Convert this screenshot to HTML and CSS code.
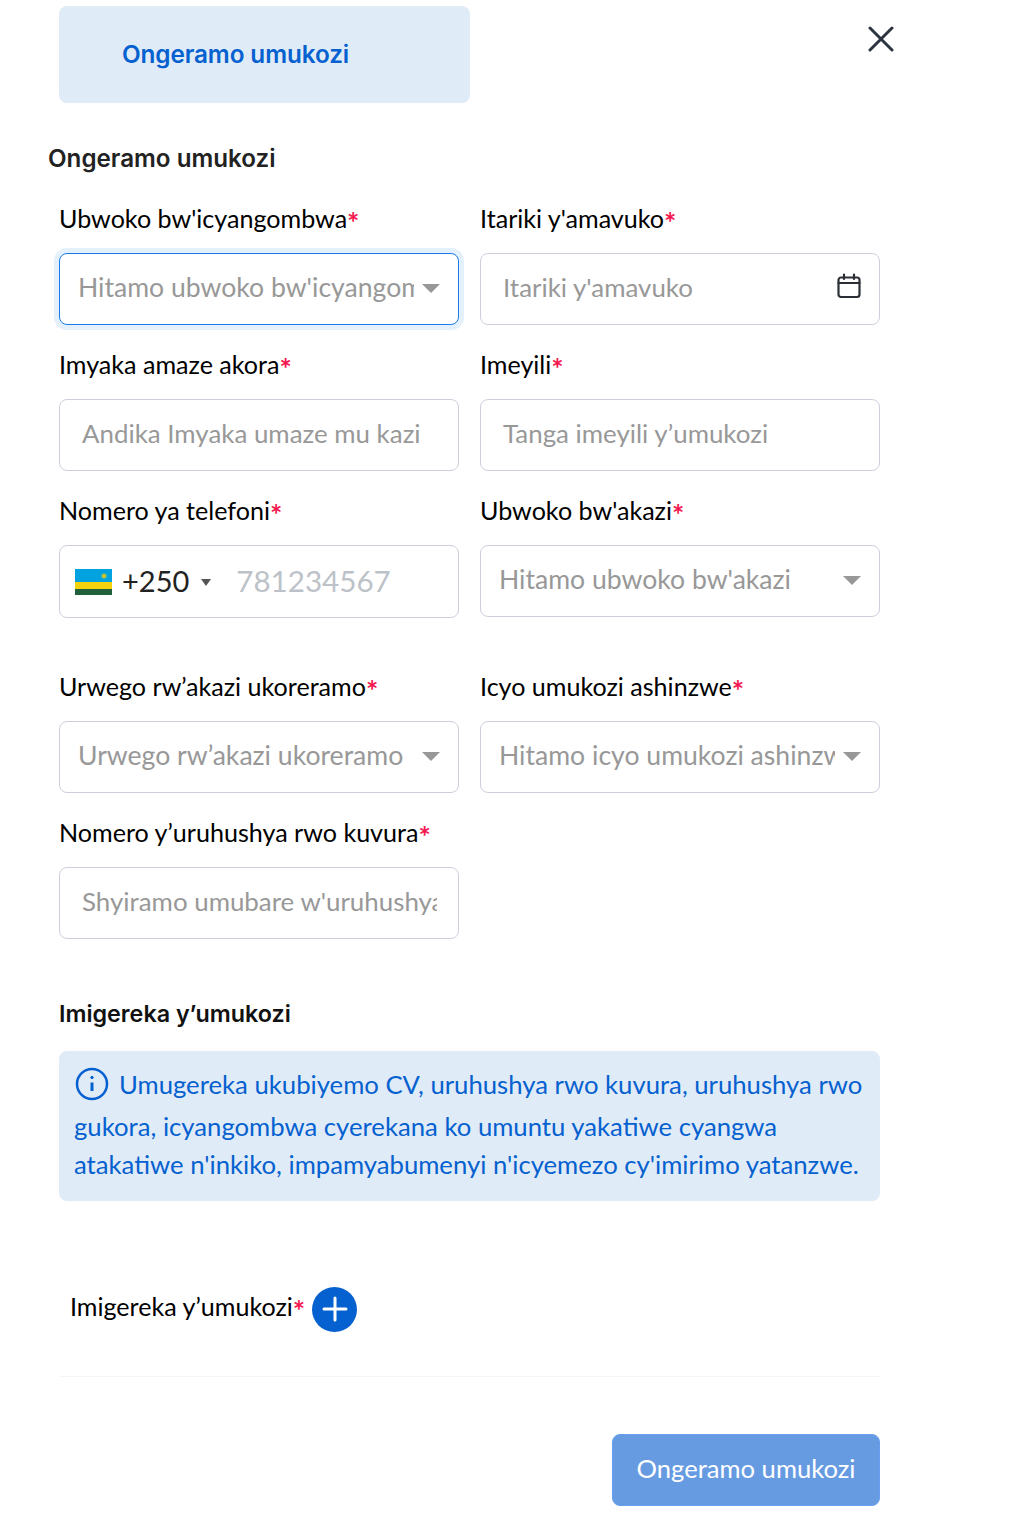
FILE: index.html
```html
<!DOCTYPE html>
<html lang="rw">
<head>
<meta charset="utf-8">
<title>Ongeramo umukozi</title>
<link rel="stylesheet" href="styles.css">
</head>
<body>
<div class="page">
  <div class="top">
    <div class="tab">Ongeramo umukozi</div>
    <svg class="close" width="26" height="26" viewBox="0 0 26 26"><path d="M2 2L24 24M24 2L2 24" stroke="#2b3440" stroke-width="3" stroke-linecap="round" fill="none"/></svg>
  </div>
  <h2 class="title">Ongeramo umukozi</h2>
  <div class="grid">
    <div class="field">
      <div class="label">Ubwoko bw'icyangombwa<span class="req">*</span></div>
      <div class="box focused select"><span class="ph">Hitamo ubwoko bw'icyangombwa</span><i class="caret"></i></div>
    </div>
    <div class="field">
      <div class="label">Itariki y'amavuko<span class="req">*</span></div>
      <div class="box input"><span class="ph">Itariki y'amavuko</span>
        <svg class="cal" width="24" height="26" viewBox="0 0 24 26" fill="none" stroke="#2b2f36" stroke-width="2.200" stroke-linecap="round"><rect x="1.500" y="4.500" width="21" height="19.500" rx="2.500"/><path d="M1.500 10H22.500M7 1.500V6M17 1.500V6"/></svg>
      </div>
    </div>
    <div class="field">
      <div class="label">Imyaka amaze akora<span class="req">*</span></div>
      <div class="box input"><span class="ph">Andika Imyaka umaze mu kazi</span></div>
    </div>
    <div class="field">
      <div class="label">Imeyili<span class="req">*</span></div>
      <div class="box input"><span class="ph">Tanga imeyili y’umukozi</span></div>
    </div>
    <div class="field tall">
      <div class="label">Nomero ya telefoni<span class="req">*</span></div>
      <div class="box phone">
        <svg class="flag" width="37" height="26" viewBox="0 0 37 26"><rect width="37" height="13" fill="#00a2e0"/><rect y="13" width="37" height="7" fill="#f4d20c"/><rect y="20" width="37" height="6" fill="#20603d"/><circle cx="29" cy="7" r="2.500" fill="#b9c43a"/></svg>
        <span class="code">+250</span><i class="mini"></i><span class="num">781234567</span>
      </div>
    </div>
    <div class="field tall">
      <div class="label">Ubwoko bw'akazi<span class="req">*</span></div>
      <div class="box select"><span class="ph">Hitamo ubwoko bw'akazi</span><i class="caret"></i></div>
    </div>
    <div class="field">
      <div class="label">Urwego rw’akazi ukoreramo<span class="req">*</span></div>
      <div class="box select"><span class="ph">Urwego rw’akazi ukoreramo</span><i class="caret"></i></div>
    </div>
    <div class="field">
      <div class="label">Icyo umukozi ashinzwe<span class="req">*</span></div>
      <div class="box select"><span class="ph">Hitamo icyo umukozi ashinzwe</span><i class="caret"></i></div>
    </div>
    <div class="field">
      <div class="label">Nomero y’uruhushya rwo kuvura<span class="req">*</span></div>
      <div class="box input"><span class="ph">Shyiramo umubare w'uruhushya</span></div>
    </div>
  </div>
  <h3 class="sub">Imigereka y’umukozi</h3>
  <div class="note">
    <p class="line first"><svg class="info" width="34" height="34" viewBox="0 0 34 34" fill="none" stroke="#0561cf" stroke-width="2.500"><circle cx="17" cy="17" r="15"/><path d="M17 15.500V24" stroke-width="3"/><circle cx="17" cy="10.500" r="1.200" fill="#0561cf" stroke-width="1"/></svg>Umugereka ukubiyemo CV, uruhushya rwo kuvura, uruhushya rwo</p>
    <p class="line">gukora, icyangombwa cyerekana ko umuntu yakatiwe cyangwa</p>
    <p class="line">atakatiwe n'inkiko, impamyabumenyi n'icyemezo cy'imirimo yatanzwe.</p>
  </div>
  <div class="attach">
    <span class="label">Imigereka y’umukozi<span class="req">*</span></span>
    <span class="plus"><svg width="26" height="26" viewBox="0 0 26 26"><path d="M13 2V24M2 13H24" stroke="#fff" stroke-width="3" stroke-linecap="round"/></svg></span>
  </div>
  <hr class="rule">
  <div class="actions"><button class="submit" type="button">Ongeramo umukozi</button></div>
</div>
</body>
</html>
```
FILE: styles.css
```css
* { box-sizing: border-box; }
html, body { margin: 0; padding: 0; background: #fff; }
body { font-family: "Lato", "Noto Sans", sans-serif; color: #000; overflow: hidden; }
.page { width: 1033px; height: 1518px; padding: 6px 0 0 59px; }
.top { width: 821px; display: flex; justify-content: space-between; align-items: flex-start; }
.tab { width: 411px; height: 97px; background: #e0ebf8; border-radius: 8px; padding: 0 0 2px 63px; display: flex; align-items: center; font-family: "Inter", sans-serif; font-size: 24.300px; font-weight: 600; color: #0561cf; letter-spacing: -0.1px; }
.close { margin: 20px -14px 0 0; }
.title { margin: 41px 0 0 -11px; font-family: "Inter", sans-serif; font-size: 24.200px; line-height: 30px; font-weight: 600; color: #222; }
.grid { width: 821px; margin-top: 29px; display: grid; grid-template-columns: 400px 400px; column-gap: 21px; }
.field { height: 146px; }
.field.tall { height: 176px; }
.label { font-size: 25.100px; line-height: 30px; color: #000; }
.req { color: #f5174f; font-size: 29px; font-weight: 700; line-height: 0; vertical-align: -5px; }
.box { margin-top: 20px; height: 72px; width: 400px; border: 1px solid #ccd0db; border-radius: 8px; display: flex; align-items: center; color: #989898; position: relative; background: #fff; }
.ph { white-space: nowrap; overflow: hidden; }
.input { padding: 0 21px 0 22px; font-size: 25.900px; }
.input .ph { flex: 1; margin-top: -4px; }
.select { padding-left: 18px; font-size: 26.600px; }
.select .ph { width: 336px; margin-top: -4px; }
.focused { border-color: #1a7bea; box-shadow: 0 0 0 5px #e5f0fd; }
.caret { margin: -2px 0 0 8px; width: 0; height: 0; border-left: 9px solid transparent; border-right: 9px solid transparent; border-top: 9px solid #989898; }
.cal { flex: none; margin: -7px -3px 0 0; }
.phone { padding-left: 15px; height: 73px; }
.flag { flex: none; }
.code { margin: -2px 0 0 10px; font-size: 29px; color: #222; }
.mini { margin: 2px 0 0 12px; width: 0; height: 0; border-left: 5px solid transparent; border-right: 5px solid transparent; border-top: 7px solid #555; }
.num { margin: -2px 0 0 25px; font-size: 29.600px; color: #bcc2c8; }
.sub { margin: 36px 0 0; font-family: "Inter", sans-serif; font-size: 23.300px; line-height: 30px; font-weight: 600; color: #111; }
.note { margin-top: 22px; width: 821px; height: 150px; background: #e0ebf8; border-radius: 8px; padding: 10px 0 0 15px; color: #0561cf; font-size: 25.700px; }
.line { margin: 0; line-height: 38px; white-space: nowrap; }
.first { display: flex; align-items: center; height: 46px; line-height: 44px; }
.info { flex: none; margin: 0 10px 0 1px; }
.attach { margin: 85px 0 0 11px; display: flex; align-items: center; height: 46px; }
.attach .label { margin-top: -6px; }
.plus { margin-left: 7px; width: 45px; height: 45px; border-radius: 50%; background: #0561cf; display: flex; align-items: center; justify-content: center; }
.rule { margin: 44px 0 0; width: 821px; border: 0; border-top: 1px solid #f5f5f5; }
.actions { width: 821px; margin-top: 57px; display: flex; justify-content: flex-end; }
.submit { width: 268px; height: 72px; padding: 0 0 4px; background: #669be2; border: 1px solid #66a0ee; border-radius: 8px; color: #fff; font: 25.600px "Lato", "Noto Sans", sans-serif; }
```
